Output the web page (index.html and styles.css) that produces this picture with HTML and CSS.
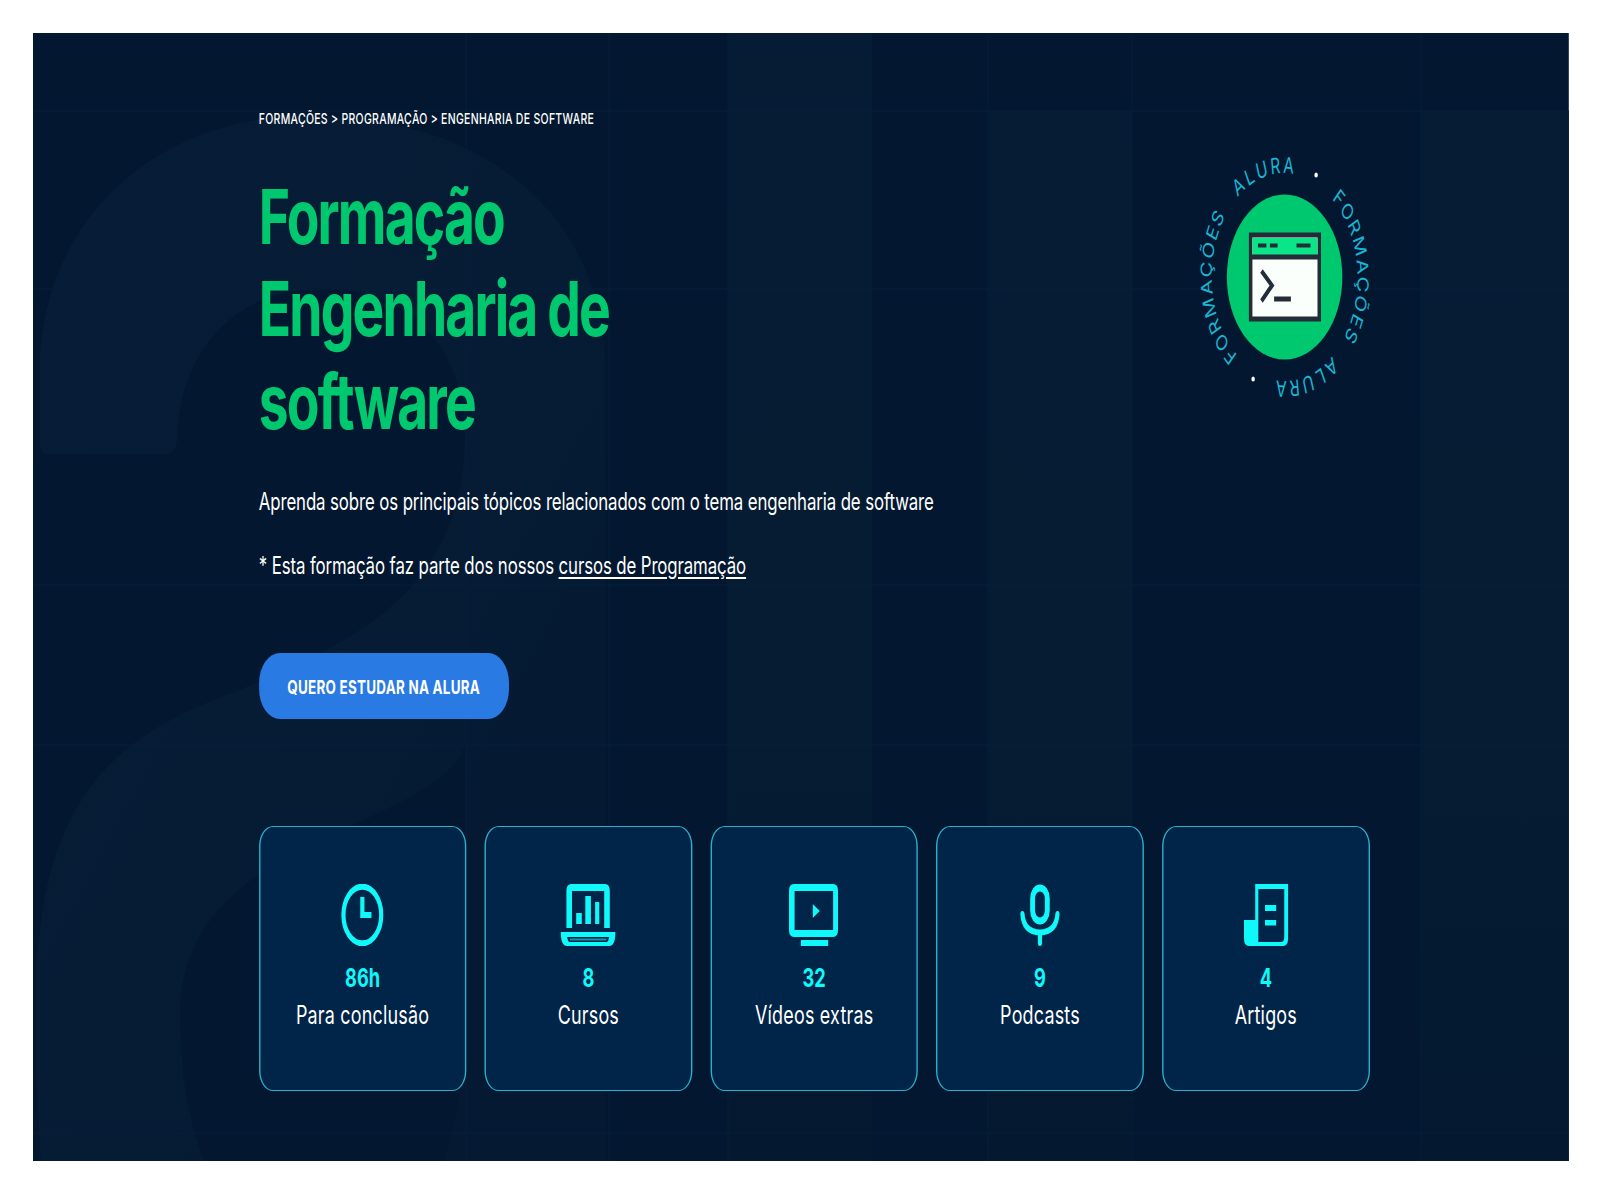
FILE: index.html
```html
<!DOCTYPE html>
<html lang="pt-BR">
<head>
<meta charset="utf-8">
<title>Formação Engenharia de software</title>
<link rel="stylesheet" href="styles.css">
</head>
<body>
<div class="frame">
<main class="hero">
  <svg class="hero-art" viewBox="0 0 1536 1128" preserveAspectRatio="none" aria-hidden="true">
    <defs>
      <linearGradient id="letter-fade" x1="0" y1="0" x2="1" y2="1">
        <stop offset="0" stop-color="#071d37"/>
        <stop offset="0.5" stop-color="#061c35"/>
        <stop offset="0.75" stop-color="#051a32"/>
      </linearGradient>
      <linearGradient id="band-fade" x1="0" y1="0" x2="0" y2="1">
        <stop offset="0" stop-color="#051c34"/>
        <stop offset="0.6" stop-color="#051c33"/>
        <stop offset="1" stop-color="#041930"/>
      </linearGradient>
    </defs>
    <g fill="url(#band-fade)">
      <rect x="695" width="144" height="1128"/>
      <rect x="955" y="78" width="144" height="1050"/>
      <rect x="1388" y="78" width="148" height="1050"/>
    </g>
    <path fill="url(#letter-fade)" d="M7 411 V330 C12 180 130 83 275 83 C450 83 572 180 572 340 V1128 H411 Q432 1060 432 990 V712 C400 800 147 800 147 980 Q147 1070 171 1128 H8 Q4 1080 4 960 C4 760 90 700 200 660 C320 610 432 560 432 400 C432 310 370 255 290 255 C200 255 146 320 144 405 Q143 421 132 421 H17 Q7 421 7 411 Z"/>
    <path class="art-lines" d="M0 78H1536 M0 256H1536 M0 552H1536 M0 712H1536 M0 1100H1536 M433 0V1128 M576 0V1128 M695 0V1128 M955 0V1128 M1099 0V1128 M1388 0V1128"/>
  </svg>

  <div class="content">
    <nav class="breadcrumb">FORMAÇÕES &gt; PROGRAMAÇÃO &gt; ENGENHARIA DE SOFTWARE</nav>
    <header class="intro">
      <h1 class="title">Formação<br>Engenharia de<br>software</h1>
      <svg class="badge" viewBox="-120 -120 240 240" aria-hidden="true">
        <defs>
          <path id="ring-right" d="M67.6 -77.7 A103 103 0 1 1 -67.6 77.7"/>
          <path id="ring-left" d="M-67.6 77.7 A103 103 0 1 1 67.6 -77.7"/>
        </defs>
        <g class="ring-text">
          <text textLength="153"><textPath href="#ring-right" textLength="153">FORMAÇÕES</textPath></text>
          <text textLength="86"><textPath href="#ring-right" startOffset="178" textLength="86">ALURA</textPath></text>
          <text textLength="153"><textPath href="#ring-left" textLength="153">FORMAÇÕES</textPath></text>
          <text textLength="86"><textPath href="#ring-left" startOffset="179" textLength="86">ALURA</textPath></text>
        </g>
        <circle cx="45" cy="-102" r="2.5" fill="#fff"/>
        <circle cx="-45" cy="102" r="2.5" fill="#fff"/>
        <circle r="82.5" fill="#00c86f"/>
        <rect x="-48.5" y="-42" width="98" height="84" fill="#fbfffb" stroke="#242b39" stroke-width="5"/>
        <rect x="-46" y="-39" width="93" height="18" fill="#0ae588"/>
        <path d="M-50 -20H51" stroke="#242b39" stroke-width="5"/>
        <path d="M-38 -31.5H-26 M-21 -31.5H-10 M17 -31.5H37" stroke="#242b39" stroke-width="4"/>
        <path d="M-33 -6L-18 8.500L-33 24" fill="none" stroke="#242b39" stroke-width="5"/>
        <path d="M-15 22H9" stroke="#242b39" stroke-width="5"/>
      </svg>
    </header>
    <p class="lead">Aprenda sobre os principais tópicos relacionados com o tema engenharia de software</p>
    <p class="note">* Esta formação faz parte dos nossos <a class="link" href="#">cursos de Programação</a></p>
    <a class="cta" href="#">QUERO ESTUDAR NA ALURA</a>

    <ul class="stats">
      <li class="card">
        <svg class="icon" viewBox="0 0 80 62"><ellipse cx="39.500" cy="31" rx="27" ry="28.300"/><path d="M39.500 13V31H52.500"/></svg>
        <strong class="number">86h</strong><span class="label">Para conclusão</span>
      </li>
      <li class="card">
        <svg class="icon" viewBox="0 0 80 62"><path class="fill" d="M9 44V7Q9 0 16 0H64Q71 0 71 7V44H63V7H17V44Z M23 29H31V40H23Z M36 12H44V40H36Z M50 18H56V40H50Z"/><path class="fill" fill-rule="evenodd" d="M1 48H79Q79 62 70 62H10Q1 62 1 48Z M10 53Q11 58 14 58H66Q69 58 70 53Z"/><path d="M14 55.500H66" stroke-width="2" opacity="0.55"/></svg>
        <strong class="number">8</strong><span class="label">Cursos</span>
      </li>
      <li class="card">
        <svg class="icon" viewBox="0 0 80 62"><path class="fill" fill-rule="evenodd" d="M11 0H67Q74 0 74 7V46Q74 53 67 53H11Q4 53 4 46V7Q4 0 11 0Z M12 7V46H67V7Z M38 20L48 27L38 34Z M21 56H60V62H21Z"/></svg>
        <strong class="number">32</strong><span class="label">Vídeos extras</span>
      </li>
      <li class="card">
        <svg class="icon" viewBox="0 0 80 62"><rect x="29" y="4" width="21" height="33" rx="10.500" stroke-width="7"/><path d="M14.500 30Q16 48 39.500 48.500Q63 48 64.500 30" stroke-linecap="round"/><path d="M39.500 49V59" stroke-linecap="round"/></svg>
        <strong class="number">9</strong><span class="label">Podcasts</span>
      </li>
      <li class="card">
        <svg class="icon" viewBox="0 0 80 62"><path class="fill" fill-rule="evenodd" d="M25 0H72V54Q72 62 65 62H16Q9 62 9 54V36H25Z M29.500 5V58H62Q66.500 58 66.500 53V5Z"/><path class="fill" d="M39 21H55V27H39Z M39 36H55V41.500H39Z"/></svg>
        <strong class="number">4</strong><span class="label">Artigos</span>
      </li>
    </ul>
  </div>
</main>
</div>
</body>
</html>
```
FILE: styles.css
```css
* {
  box-sizing: border-box;
  margin: 0;
  padding: 0;
}

body {
  padding: 33px;
  background: #fff;
  font-family: Inter, "Liberation Sans", sans-serif;
}

.frame {
  width: 1536px;
  height: 1128px;
  margin-bottom: -4px;
  overflow: hidden;
}

/* The whole panel is condensed horizontally to 70% of its natural width. */
.hero {
  position: relative;
  width: 2194.3px;
  height: 1128px;
  padding: 71px 284px 0 322.5px;
  transform: scaleX(0.7);
  transform-origin: 0 0;
  overflow: hidden;
  background: #031830;
  color: #fff;
}

.hero-art {
  position: absolute;
  inset: 0;
  width: 100%;
  height: 100%;
}

.art-lines { fill: none; stroke: #061e3a; stroke-width: 1; }

.content {
  position: relative;
  display: flex;
  flex-direction: column;
  align-items: flex-start;
}

.breadcrumb {
  height: 30px;
  line-height: 30px;
  font-size: 15px;
  font-weight: 500;
  letter-spacing: 0.42px;
  white-space: nowrap;
}

.intro {
  display: flex;
  justify-content: space-between;
  align-items: flex-start;
  width: 1585px;
  height: 299px;
  margin-top: 36px;
}

.title {
  color: #00c86f;
  font-size: 76.2px;
  font-weight: 750;
  letter-spacing: -2.6px;
  line-height: 92.3px;
}

.badge {
  width: 240px;
  height: 240px;
  margin-top: -13px;
  overflow: visible;
}

.ring-text {
  fill: #1bb4d3;
  font-size: 22px;
}

.lead,
.note {
  font-size: 24px;
  line-height: 32px;
  letter-spacing: -0.14px;
  white-space: nowrap;
}

.lead { margin-top: 17px; }
.note { margin-top: 32px; }

.link {
  color: inherit;
  text-underline-offset: 3px;
}

.cta {
  display: flex;
  justify-content: center;
  align-items: center;
  width: 357px;
  height: 66px;
  padding-top: 1px;
  margin-top: 71px;
  border-radius: 30px;
  background: #2a7ae4;
  color: #fff;
  font-size: 19.2px;
  font-weight: 700;
  letter-spacing: 0.35px;
  text-decoration: none;
}

.stats {
  display: grid;
  grid-template-columns: repeat(5, 1fr);
  gap: 26px;
  width: 1587px;
  margin-top: 107px;
  list-style: none;
}

.card {
  display: flex;
  flex-direction: column;
  align-items: center;
  height: 265px;
  padding-top: 57px;
  border: solid #2ab0cc;
  border-width: 1px 2px;
  border-radius: 20px;
  background: #012548;
}

.icon {
  width: 80px;
  height: 62px;
  fill: none;
  stroke: #0ff9fb;
  stroke-width: 6;
}

.icon .fill {
  fill: #0ff9fb;
  stroke: none;
}

.number {
  margin-top: 16px;
  color: #0ff9fb;
  font-size: 26px;
  line-height: 32px;
}

.label {
  margin-top: 5px;
  font-size: 25.6px;
  line-height: 32px;
  letter-spacing: 0.3px;
}
```
